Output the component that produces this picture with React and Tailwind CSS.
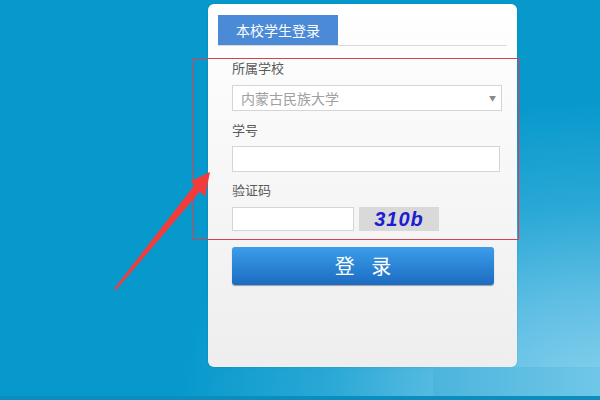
import React from 'react';

const cjk = { fontFamily: '"Microsoft YaHei", "Noto Sans CJK SC", sans-serif' };

const Field = ({ label, className, children }) => (
  <>
    <div className={`h-[20px] flex items-center text-[13px] text-[#5a5a5a] ${className}`}>{label}</div>
    {children}
  </>
);

export default function App() {
  return (
    <div
      style={cjk}
      className="relative w-[600px] h-[400px] overflow-hidden bg-[#0799cc] bg-[radial-gradient(ellipse_70%_75%_at_100%_100%,#8ad2ee_0%,#5ebee3_35%,#2aa8d6_65%,#0799cc_100%)] bg-no-repeat"
    >
      {/* login card */}
      <div className="ml-[208px] mt-[4px] w-[309px] h-[363px] rounded-[6px] bg-gradient-to-b from-white to-[#eeeeee] shadow-[0_0_2px_rgba(0,0,0,0.15)]">
        <div className="mx-[10px] pt-[11px] border-b border-[#dadada]">
          <div className="w-[120px] h-[30px] bg-[#4a8ad6] text-white text-[14px] flex items-center justify-center">
            本校学生登录
          </div>
        </div>

        <div className="px-[24px]">
          <Field label="所属学校" className="mt-[12px]">
            <div className="mt-[7px] w-[270px] h-[26px] border border-[#d5d5d5] bg-white flex items-center justify-between pl-[8px] pr-[5px]">
              <span className="text-[14px] text-[#a0a0a0]">内蒙古民族大学</span>
              <span className="text-[7px] text-[#888]">▼</span>
            </div>
          </Field>

          <Field label="学号" className="mt-[9px]">
            <div className="mt-[6px] w-[268px] h-[26px] border border-[#d5d5d5] bg-white" />
          </Field>

          <Field label="验证码" className="mt-[8px]">
            <div className="mt-[7px] flex items-start gap-[5px]">
              <div className="w-[122px] h-[24px] border border-[#d5d5d5] bg-white" />
              <div
                className="w-[80px] h-[24px] bg-[#d9d9d9] flex items-center justify-center text-[20px] font-bold italic text-[#1c1cd0] tracking-[1px]"
                style={{ fontFamily: '"Liberation Sans", Arial, sans-serif' }}
              >
                310b
              </div>
            </div>
          </Field>

          <button className="mt-[16px] w-[262px] h-[38px] rounded-[3px] bg-gradient-to-b from-[#3c9eea] to-[#1c6cc2] shadow-[0_1px_1px_rgba(0,0,0,0.35)] text-white text-[20px] tracking-[6px] pl-[6px] flex items-center justify-center">
            登 录
          </button>
        </div>
      </div>

      {/* lower right background strip */}
      <div className="ml-[433px] w-[167px] h-[29px] bg-gradient-to-r from-[#4cb4dd] to-[#6fc7e7]" />
      <div className="h-[4px] bg-[#0a8ec0]" />

      {/* annotation box */}
      <div className="absolute left-[193px] top-[58px] w-[326px] h-[182px] border border-[#d8404e]" />

      {/* annotation arrow */}
      <svg className="absolute left-0 top-0" width="600" height="400" viewBox="0 0 600 400">
        <polygon points="114,289 116,290 203,188 197,182" fill="#f23c3c" />
        <polygon points="210,172 191,181 205,197" fill="#f23c3c" />
      </svg>
    </div>
  );
}
